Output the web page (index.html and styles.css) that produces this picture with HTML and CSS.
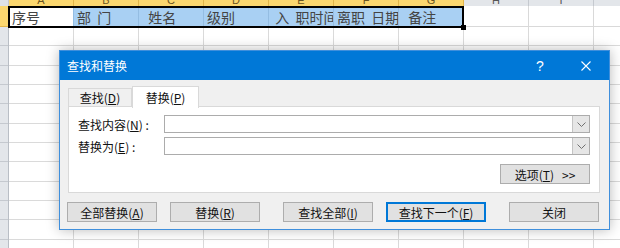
FILE: index.html
```html
<!DOCTYPE html>
<html lang="zh-CN">

<head>
  <meta charset="UTF-8">
  <title>查找和替换</title>
  <link rel="stylesheet" href="styles.css">
</head>

<body>
  <div class="sheet">
    <div class="heads">
      <div class="corner"></div>
      <div class="ch hot">A</div>
      <div class="ch hot">B</div>
      <div class="ch hot">C</div>
      <div class="ch hot">D</div>
      <div class="ch hot">E</div>
      <div class="ch hot">F</div>
      <div class="ch hot">G</div>
      <div class="ch">H</div>
      <div class="ch">I</div>
      <div class="ch">J</div>
    </div>

    <div class="row first">
      <div class="rh hot"></div>
      <div class="selection">
        <div class="cell active">序号</div>
        <div class="cell">部&nbsp;&nbsp;门</div>
        <div class="cell">&nbsp;&nbsp;姓名</div>
        <div class="cell">级别</div>
        <div class="cell">&nbsp;入&nbsp;&nbsp;职时间</div>
        <div class="cell">离职&nbsp;&nbsp;日期</div>
        <div class="cell">&nbsp;&nbsp;备注</div>
        <span class="handle"></span>
      </div>
      <div class="cell"></div>
      <div class="cell"></div>
      <div class="cell"></div>
    </div>

    <div class="rows">
      <div class="rh-col"></div>
      <div class="cells"></div>
    </div>
  </div>

  <div class="dialog">
    <div class="titlebar">
      <span class="title">查找和替换</span>
      <span class="tb-btn help">?</span>
      <span class="tb-btn">
        <svg width="10" height="10" viewBox="0 0 10 10">
          <path d="M0.5 0.5 L9.5 9.5 M9.5 0.5 L0.5 9.5" stroke="#fff" stroke-width="1.1" fill="none" />
        </svg>
      </span>
    </div>

    <div class="body">
      <div class="tabs">
        <div class="tab">查找(<u>D</u>)</div>
        <div class="tab current">替换(<u>P</u>)</div>
      </div>

      <div class="panel">
        <div class="field">
          <label class="field-label">查找内容(<u>N</u>)&nbsp;:</label>
          <div class="combo">
            <div class="combo-text"></div>
            <div class="combo-btn">
              <svg width="9" height="5" viewBox="0 0 9 5">
                <polyline points="0.5,0.5 4.5,4.5 8.5,0.5" stroke="#707070" fill="none" />
              </svg>
            </div>
          </div>
        </div>
        <div class="field">
          <label class="field-label">替换为(<u>E</u>)&nbsp;:</label>
          <div class="combo">
            <div class="combo-text"></div>
            <div class="combo-btn">
              <svg width="9" height="5" viewBox="0 0 9 5">
                <polyline points="0.5,0.5 4.5,4.5 8.5,0.5" stroke="#707070" fill="none" />
              </svg>
            </div>
          </div>
        </div>
        <div class="options-row">
          <button class="btn options">选项(<u>T</u>)&nbsp;&nbsp;&nbsp;&gt;&gt;</button>
        </div>
      </div>

      <div class="actions">
        <div class="group">
          <button class="btn">全部替换(<u>A</u>)</button>
          <button class="btn">替换(<u>R</u>)</button>
        </div>
        <div class="group">
          <button class="btn">查找全部(<u>I</u>)</button>
          <button class="btn default">查找下一个(<u>F</u>)</button>
        </div>
        <button class="btn">关闭</button>
      </div>
    </div>
  </div>
</body>

</html>
```

FILE: styles.css
```css
body {
  margin: 0;
  width: 620px;
  height: 248px;
  overflow: hidden;
  position: relative;
  background-color: #fff;
  font-family: "Noto Sans CJK SC", sans-serif;
}

/* spreadsheet behind the dialog */

.sheet {
  display: flex;
  flex-direction: column;
  width: 620px;
  height: 248px;
  overflow: hidden;
}

.heads {
  display: flex;
  height: 6px;
  overflow: hidden;
}

.corner {
  width: 9px;
  flex-shrink: 0;
  background-color: #dfe2e6;
  border-right: 1px solid #c5c9cf;
  box-sizing: border-box;
}

.ch {
  width: 65px;
  flex-shrink: 0;
  box-sizing: border-box;
  background-color: #e3e6ea;
  border-right: 1px solid #c5c9cf;
  color: #555;
  font-family: "Liberation Sans", sans-serif;
  font-size: 11px;
  line-height: 0;
  text-align: center;
}

.ch.hot {
  background-color: #fbd76f;
  border-right-color: #e2b64a;
  color: #6a5320;
}

.row {
  display: flex;
  height: 21px;
}

.rh {
  width: 9px;
  flex-shrink: 0;
  box-sizing: border-box;
  background-color: #e3e6ea;
  border-right: 1px solid #b9bec5;
  border-bottom: 1px solid #c5c9cf;
}

.rh.hot {
  background-color: #fbd76f;
  border-right-color: #e2b64a;
  border-bottom-color: #e2b64a;
}

.selection {
  display: flex;
  position: relative;
}

.selection::after {
  content: "";
  position: absolute;
  left: -1px;
  top: 0;
  right: 0;
  bottom: -1px;
  border: 2px solid #000;
}

.handle {
  position: absolute;
  right: -2px;
  bottom: -3px;
  width: 5px;
  height: 5px;
  background-color: #000;
  z-index: 1;
}

.cell {
  width: 65px;
  flex-shrink: 0;
  box-sizing: border-box;
  border-right: 1px solid #d9d9d9;
  border-bottom: 1px solid #d9d9d9;
  padding: 2px 0 0 3px;
  overflow: hidden;
  white-space: nowrap;
  font-size: 14px;
  line-height: 18px;
  color: #444;
}

.selection .cell {
  background-color: #a9d0f3;
  border-right-color: #94bde2;
}

.selection .cell.active {
  background-color: #fff;
}

.rows {
  display: flex;
  flex: 1;
}

.rh-col {
  width: 9px;
  flex-shrink: 0;
  box-sizing: border-box;
  border-right: 1px solid #b9bec5;
  background-color: #e3e6ea;
  background-image: repeating-linear-gradient(to bottom, transparent 0, transparent 18.33px, #c5c9cf 18.33px, #c5c9cf 19.33px);
}

.cells {
  flex: 1;
  background-image:
    repeating-linear-gradient(to bottom, transparent 0, transparent 18.33px, #dadada 18.33px, #dadada 19.33px),
    repeating-linear-gradient(to right, transparent 0, transparent 64px, #dadada 64px, #dadada 65px);
}

/* find and replace dialog */

.dialog {
  position: absolute;
  left: 59px;
  top: 50px;
  width: 551px;
  height: 180px;
  box-sizing: border-box;
  border: 1px solid #3f8fdc;
  background-color: #f0f0f0;
  box-shadow: 0 0 12px rgba(0, 0, 0, 0.28);
  font-size: 12px;
  color: #111;
}

.titlebar {
  display: flex;
  align-items: center;
  height: 29px;
  background-color: #0078d7;
  color: #fff;
}

.title {
  flex: 1;
  padding-left: 7px;
  font-size: 12px;
}

.tb-btn {
  display: flex;
  align-items: center;
  justify-content: center;
  width: 46px;
  height: 29px;
}

.tb-btn.help {
  font-family: "Liberation Sans", sans-serif;
  font-size: 14px;
}

.body {
  padding: 6px 9px 0 8px;
}

.tabs {
  display: flex;
  align-items: flex-end;
  height: 21px;
  margin-bottom: -1px;
  position: relative;
  z-index: 1;
}

.tab {
  height: 19px;
  width: 64px;
  box-sizing: border-box;
  border: 1px solid #d9d9d9;
  border-bottom: none;
  text-align: center;
  line-height: 18px;
}

.tab.current {
  height: 22px;
  width: 67px;
  margin-bottom: -1px;
  background-color: #fff;
  line-height: 21px;
}

.panel {
  height: 87px;
  box-sizing: border-box;
  background-color: #fff;
  border: 1px solid #d9d9d9;
  padding: 8px 9px 0 9px;
}

.field {
  display: flex;
  align-items: center;
  height: 18px;
  margin-bottom: 4px;
}

.field-label {
  width: 86px;
  flex-shrink: 0;
}

.combo {
  flex: 1;
  display: flex;
  height: 18px;
  box-sizing: border-box;
  border: 1px solid #acacac;
  background-color: #fff;
}

.combo-text {
  flex: 1;
}

.combo-btn {
  width: 16px;
  display: flex;
  align-items: center;
  justify-content: center;
  background-color: #e6e6e6;
  border-left: 1px solid #c4c4c4;
}

.options-row {
  display: flex;
  justify-content: flex-end;
  margin-top: 9px;
}

.btn {
  width: 90px;
  height: 20px;
  padding: 0;
  box-sizing: border-box;
  background-color: #e1e1e1;
  border: 1px solid #adadad;
  font-family: "Noto Sans CJK SC", sans-serif;
  font-size: 12px;
  line-height: 17px;
  color: #111;
}

.btn.default {
  width: 100px;
  border: 2px solid #0078d7;
  line-height: 15px;
}

.actions {
  display: flex;
  gap: 23px;
  margin: 9px 0 0 -1px;
}

.group {
  display: flex;
  gap: 13px;
}
```
